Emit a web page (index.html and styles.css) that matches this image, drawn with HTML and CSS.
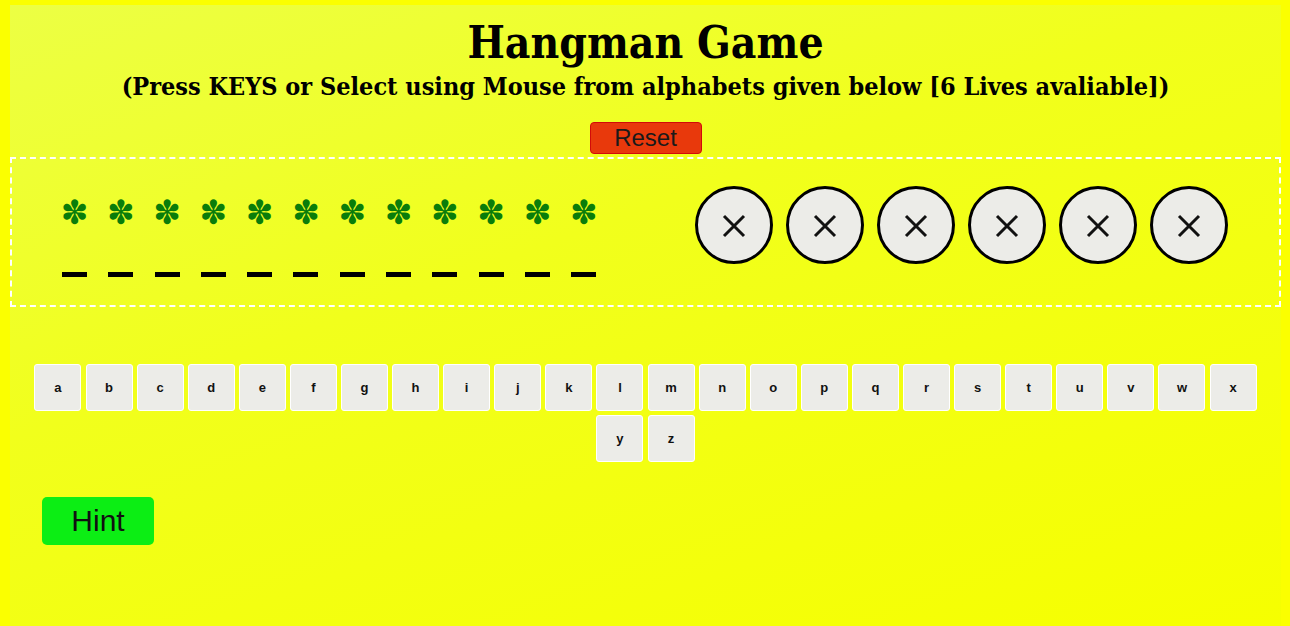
FILE: index.html
```html
<!DOCTYPE html>
<html lang="en">
<head>
<meta charset="utf-8">
<title>Hangman Game</title>
<link rel="stylesheet" href="styles.css">
</head>
<body>
<main class="page">
  <h1 class="title">Hangman Game</h1>
  <h2 class="subtitle">(Press KEYS or Select using Mouse from alphabets given below [6 Lives avaliable])</h2>
  <div class="reset-row"><button class="reset">Reset</button></div>

  <section class="board">
    <div class="word">
      <div class="slot"><span class="mark">✽</span><span class="bar"></span></div>
      <div class="slot"><span class="mark">✽</span><span class="bar"></span></div>
      <div class="slot"><span class="mark">✽</span><span class="bar"></span></div>
      <div class="slot"><span class="mark">✽</span><span class="bar"></span></div>
      <div class="slot"><span class="mark">✽</span><span class="bar"></span></div>
      <div class="slot"><span class="mark">✽</span><span class="bar"></span></div>
      <div class="slot"><span class="mark">✽</span><span class="bar"></span></div>
      <div class="slot"><span class="mark">✽</span><span class="bar"></span></div>
      <div class="slot"><span class="mark">✽</span><span class="bar"></span></div>
      <div class="slot"><span class="mark">✽</span><span class="bar"></span></div>
      <div class="slot"><span class="mark">✽</span><span class="bar"></span></div>
      <div class="slot"><span class="mark">✽</span><span class="bar"></span></div>
    </div>
    <div class="lives">
      <div class="life"><svg viewBox="0 0 24 24"><path d="M2 2 L22 22 M22 2 L2 22" stroke="#111" stroke-width="3" fill="none"/></svg></div>
      <div class="life"><svg viewBox="0 0 24 24"><path d="M2 2 L22 22 M22 2 L2 22" stroke="#111" stroke-width="3" fill="none"/></svg></div>
      <div class="life"><svg viewBox="0 0 24 24"><path d="M2 2 L22 22 M22 2 L2 22" stroke="#111" stroke-width="3" fill="none"/></svg></div>
      <div class="life"><svg viewBox="0 0 24 24"><path d="M2 2 L22 22 M22 2 L2 22" stroke="#111" stroke-width="3" fill="none"/></svg></div>
      <div class="life"><svg viewBox="0 0 24 24"><path d="M2 2 L22 22 M22 2 L2 22" stroke="#111" stroke-width="3" fill="none"/></svg></div>
      <div class="life"><svg viewBox="0 0 24 24"><path d="M2 2 L22 22 M22 2 L2 22" stroke="#111" stroke-width="3" fill="none"/></svg></div>
    </div>
  </section>

  <section class="keyboard">
    <button class="key">a</button><button class="key">b</button><button class="key">c</button><button class="key">d</button>
    <button class="key">e</button><button class="key">f</button><button class="key">g</button><button class="key">h</button>
    <button class="key">i</button><button class="key">j</button><button class="key">k</button><button class="key">l</button>
    <button class="key">m</button><button class="key">n</button><button class="key">o</button><button class="key">p</button>
    <button class="key">q</button><button class="key">r</button><button class="key">s</button><button class="key">t</button>
    <button class="key">u</button><button class="key">v</button><button class="key">w</button><button class="key">x</button>
    <button class="key">y</button><button class="key">z</button>
  </section>

  <div class="hint-row"><button class="hint">Hint</button></div>
</main>
</body>
</html>
```

FILE: styles.css
```css
html {
  background: #fbff00;
  height: 100%;
}
body {
  margin: 0;
  padding: 5px 9px 0 10px;
  height: 100%;
  box-sizing: border-box;
}
.page {
  height: 100%;
  background: linear-gradient(160deg, #ecff44 0%, #f1ff1c 40%, #f6ff00 100%);
  padding-top: 1px;
  box-sizing: border-box;
}
.title {
  margin: 12px 0 0;
  text-align: center;
  font-family: "DejaVu Serif Condensed", "DejaVu Serif", serif;
  font-stretch: condensed;
  font-weight: bold;
  font-size: 44px;
  line-height: 50px;
  color: #000;
}
.subtitle {
  margin: 2px 0 0;
  text-align: center;
  font-family: "DejaVu Serif Condensed", "DejaVu Serif", serif;
  font-stretch: condensed;
  font-weight: bold;
  font-size: 25px;
  line-height: 34px;
  color: #000;
}
.reset-row {
  display: flex;
  justify-content: center;
  margin-top: 18px;
}
.reset {
  width: 112px;
  height: 32px;
  background: #e8390c;
  border: 1px solid #d20a0a;
  border-radius: 4px;
  font-family: "Liberation Sans", Arial, sans-serif;
  font-size: 24px;
  line-height: 28px;
  color: #1a1a1a;
  padding: 0;
}
.board {
  margin-top: 3px;
  height: 150px;
  box-sizing: border-box;
  border: 2px dashed #ffffff;
  display: flex;
  justify-content: space-between;
  align-items: flex-start;
  padding: 0 51px 0 50px;
}
.word {
  display: flex;
  gap: 21.3px;
  margin-top: 38px;
}
.slot {
  width: 25px;
  display: flex;
  flex-direction: column;
  align-items: center;
}
.mark {
  font-family: "DejaVu Sans", sans-serif;
  font-size: 33px;
  line-height: 32px;
  color: #0a7d0a;
}
.bar {
  width: 25px;
  height: 5px;
  background: #000;
  margin-top: 43px;
}
.lives {
  display: flex;
  gap: 13px;
  margin-top: 27px;
}
.life {
  width: 78px;
  height: 78px;
  box-sizing: border-box;
  border: 3px solid #000;
  border-radius: 50%;
  background: #ecece8;
  display: flex;
  align-items: center;
  justify-content: center;
}
.life svg {
  width: 24px;
  height: 24px;
  margin-top: 1px;
}
.keyboard {
  margin-top: 55px;
  display: flex;
  flex-wrap: wrap;
  justify-content: center;
}
.key {
  width: 47px;
  height: 47px;
  margin: 2px 2.05px;
  padding: 0;
  box-sizing: border-box;
  background: #ecece8;
  border: 1px solid #ffffff;
  border-radius: 3px;
  font-family: "Liberation Sans", Arial, sans-serif;
  font-weight: bold;
  font-size: 13px;
  color: #111;
}
.hint-row {
  margin-top: 33px;
  padding-left: 32px;
}
.hint {
  width: 112px;
  height: 48px;
  background: #0cee14;
  border: none;
  border-radius: 5px;
  font-family: "Liberation Sans", Arial, sans-serif;
  font-size: 30px;
  color: #111;
  padding: 0;
}
```
